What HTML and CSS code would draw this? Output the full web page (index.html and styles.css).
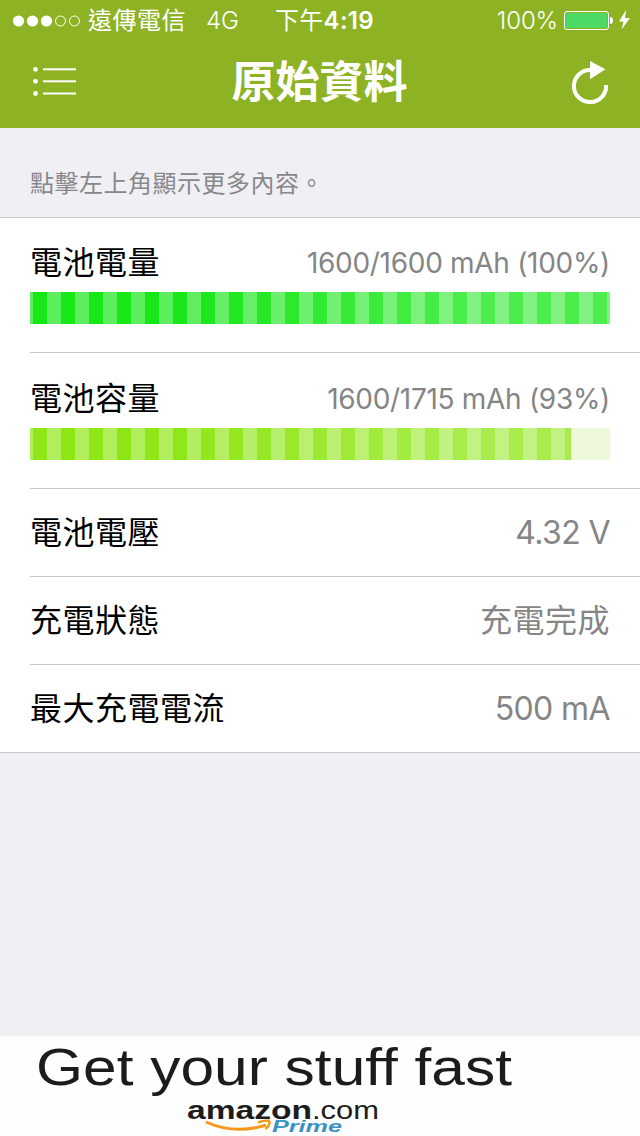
FILE: index.html
```html
<!DOCTYPE html>
<html lang="zh-Hant">
<head>
    <meta charset="UTF-8">
    <meta name="viewport" content="width=device-width, initial-scale=1.0">
    <title>原始資料</title>
    <link rel="stylesheet" href="styles.css">
</head>
<body>
    <header class="header">
        <div class="status-bar">
            <div class="status-left">
                <svg class="signal" width="70" height="14" viewBox="0 0 70 14">
                    <circle cx="6.5" cy="7" r="5.6" fill="#fff"/>
                    <circle cx="20.5" cy="7" r="5.6" fill="#fff"/>
                    <circle cx="34.5" cy="7" r="5.6" fill="#fff"/>
                    <circle cx="48.5" cy="7" r="5" fill="none" stroke="#fff"/>
                    <circle cx="62.5" cy="7" r="5" fill="none" stroke="#fff"/>
                </svg>
                <span class="carrier">遠傳電信</span>
                <span class="network">4G</span>
            </div>
            <div class="clock">下午<span class="clock-time">4:19</span></div>
            <div class="status-right">
                <span class="percent">100%</span>
                <svg width="68" height="22" viewBox="0 0 68 22">
                    <rect x="0.5" y="1.5" width="44" height="18" rx="2.5" fill="none" stroke="#fff"/>
                    <rect x="2" y="3" width="41" height="15" rx="1.5" fill="#4cd964"/>
                    <path d="M46 7 Q49 7 49 10.5 Q49 14 46 14 Z" fill="#fff"/>
                    <path d="M62 0 L55 11.5 H59.5 L57.5 19.5 L66 8 H61 Z" fill="#fff"/>
                </svg>
            </div>
        </div>
        <nav class="nav-bar">
            <svg class="menu-icon" width="44" height="32" viewBox="0 0 44 32">
                <g fill="#fff">
                    <circle cx="2.5" cy="4.3" r="2.4"/>
                    <circle cx="2.5" cy="16.3" r="2.4"/>
                    <circle cx="2.5" cy="28.5" r="2.4"/>
                    <rect x="10" y="3.3" width="33" height="2"/>
                    <rect x="10" y="15.3" width="33" height="2"/>
                    <rect x="10" y="27.5" width="33" height="2"/>
                </g>
            </svg>
            <h1 class="title">原始資料</h1>
            <svg class="refresh-icon" width="38" height="44" viewBox="0 0 38 44">
                <path d="M18.5 8.9 A16.1 16.1 0 1 0 34.1 24" fill="none" stroke="#fff" stroke-width="4"/>
                <path d="M18 0 L33.5 8.3 L18 18.3 Z" fill="#fff"/>
            </svg>
        </nav>
    </header>

    <main class="content">
        <p class="hint">點擊左上角顯示更多內容。</p>
        <ul class="list">
            <li class="item item-bar">
                <div class="row">
                    <span class="label">電池電量</span>
                    <span class="value value-small">1600/1600 mAh (100%)</span>
                </div>
                <div class="bar bar-level"><div class="fill" style="width: 100%"></div></div>
            </li>
            <li class="item item-bar item-capacity">
                <div class="row">
                    <span class="label">電池容量</span>
                    <span class="value value-small">1600/1715 mAh (93%)</span>
                </div>
                <div class="bar bar-capacity"><div class="fill" style="width: 93.29%"></div></div>
            </li>
            <li class="item row">
                <span class="label">電池電壓</span>
                <span class="value">4.32 V</span>
            </li>
            <li class="item row">
                <span class="label">充電狀態</span>
                <span class="value value-text">充電完成</span>
            </li>
            <li class="item row">
                <span class="label">最大充電電流</span>
                <span class="value">500 mA</span>
            </li>
        </ul>
    </main>

    <footer class="ad">
        <svg width="640" height="100" viewBox="0 0 640 100">
            <text class="ad-headline" x="36" y="49" textLength="476" lengthAdjust="spacingAndGlyphs">Get your stuff fast</text>
            <text class="ad-brand" x="187" y="83" textLength="125" lengthAdjust="spacingAndGlyphs">amazon</text>
            <text class="ad-com" x="312" y="83" textLength="67" lengthAdjust="spacingAndGlyphs">.com</text>
            <path d="M206 86 Q235 99 266 89" fill="none" stroke="#f7981d" stroke-width="3"/>
            <path d="M258 86.5 Q269 83 269.5 86 Q270 89 265.5 93" fill="none" stroke="#f7981d" stroke-width="2.5"/>
            <text class="ad-prime" x="272" y="96" textLength="70" lengthAdjust="spacingAndGlyphs">Prime</text>
        </svg>
    </footer>
</body>
</html>
```
FILE: styles.css
```css
* {
    margin: 0;
    padding: 0;
    box-sizing: border-box;
}

body {
    font-family: Inter, "Noto Sans CJK TC", sans-serif;
    width: 640px;
    height: 1136px;
    display: flex;
    flex-direction: column;
    background: #efeff4;
    overflow: hidden;
}

svg {
    display: block;
    flex-shrink: 0;
}

/* Header */
.header {
    height: 128px;
    background: #8db325;
    color: #fff;
}

.status-bar {
    height: 40px;
    display: grid;
    grid-template-columns: 275px 1fr auto;
    align-items: center;
    padding: 2px 8px 0 0;
    font-size: 24px;
    font-weight: 300;
    line-height: 38px;
}

.status-left,
.status-right {
    display: flex;
    align-items: center;
}

.status-left {
    padding-left: 12px;
}

.carrier {
    margin-left: 6px;
    letter-spacing: 0.5px;
    font-weight: 400;
}

.network {
    margin-left: 20px;
}

.clock {
    font-weight: 400;
    letter-spacing: 0.3px;
}

.clock-time {
    font-weight: 600;
}

.percent {
    margin-right: 6px;
    letter-spacing: -0.1px;
}

.nav-bar {
    height: 88px;
    display: flex;
    align-items: center;
    justify-content: space-between;
    padding: 0 30px 0 33px;
}

.menu-icon {
    margin-top: -7px;
}

.title {
    font-size: 44px;
    font-weight: 700;
    line-height: 60px;
    margin: -4px 10px 0 0;
}

.refresh-icon {
    margin-top: -3px;
}

/* List */
.content {
    flex: 1;
}

.hint {
    height: 89px;
    padding: 38px 30px 0;
    font-size: 24px;
    line-height: 36px;
    letter-spacing: 0.5px;
    color: #88888c;
}

.list {
    list-style: none;
    background: #fff;
    border-top: 1px solid #c8c7cc;
    border-bottom: 1px solid #c8c7cc;
}

.item {
    height: 88px;
    margin-left: 30px;
    padding-right: 30px;
    border-bottom: 1px solid #c8c7cc;
}

.item:last-child {
    height: 87px;
    border-bottom: none;
}

.row {
    display: flex;
    align-items: center;
    justify-content: space-between;
}

.item-bar {
    height: 135px;
    padding-top: 22px;
}

.item-capacity {
    height: 136px;
    padding-top: 23px;
}

.item-bar .row {
    height: 44px;
    margin-bottom: 8px;
}

.label {
    margin-bottom: 5px;
    font-size: 32px;
    letter-spacing: 0.5px;
    color: #000;
}

.value {
    font-size: 32px;
    letter-spacing: -0.6px;
    color: #858585;
}

.value-small {
    padding-top: 1px;
    font-size: 28px;
    letter-spacing: -0.3px;
}

.value-text {
    margin-bottom: 5px;
    letter-spacing: 0.5px;
}

.bar {
    height: 32px;
}

.fill {
    height: 100%;
}

/* 14px stripes over a gradient sized to the whole bar */
.bar-level .fill,
.bar-capacity .fill {
    background-repeat: repeat-x, no-repeat;
    background-position: 3px 0, 0 0;
    background-size: 28px 100%, 580px 100%;
}

.bar-level .fill {
    background-image:
        linear-gradient(90deg, transparent 50%, rgba(255, 255, 255, 0.3) 50%),
        linear-gradient(90deg, #17e617 25%, #4bed4b 75%);
}

.bar-capacity {
    background: #eef9dc;
}

.bar-capacity .fill {
    background-image:
        linear-gradient(90deg, transparent 50%, rgba(255, 255, 255, 0.3) 50%),
        linear-gradient(90deg, #8fe617 25%, #a8ed4b 75%);
}

/* Ad banner */
.ad {
    height: 100px;
    background: #fdfefe;
}

.ad text {
    font-family: "Liberation Sans", Arial, sans-serif;
    fill: #1c1c1c;
}

.ad .ad-headline {
    font-size: 52px;
}

.ad .ad-brand,
.ad .ad-com {
    font-size: 25px;
}

.ad .ad-brand {
    font-weight: 700;
}

.ad .ad-prime {
    font-size: 16px;
    font-weight: 700;
    font-style: italic;
    fill: #3b93c4;
}
```
